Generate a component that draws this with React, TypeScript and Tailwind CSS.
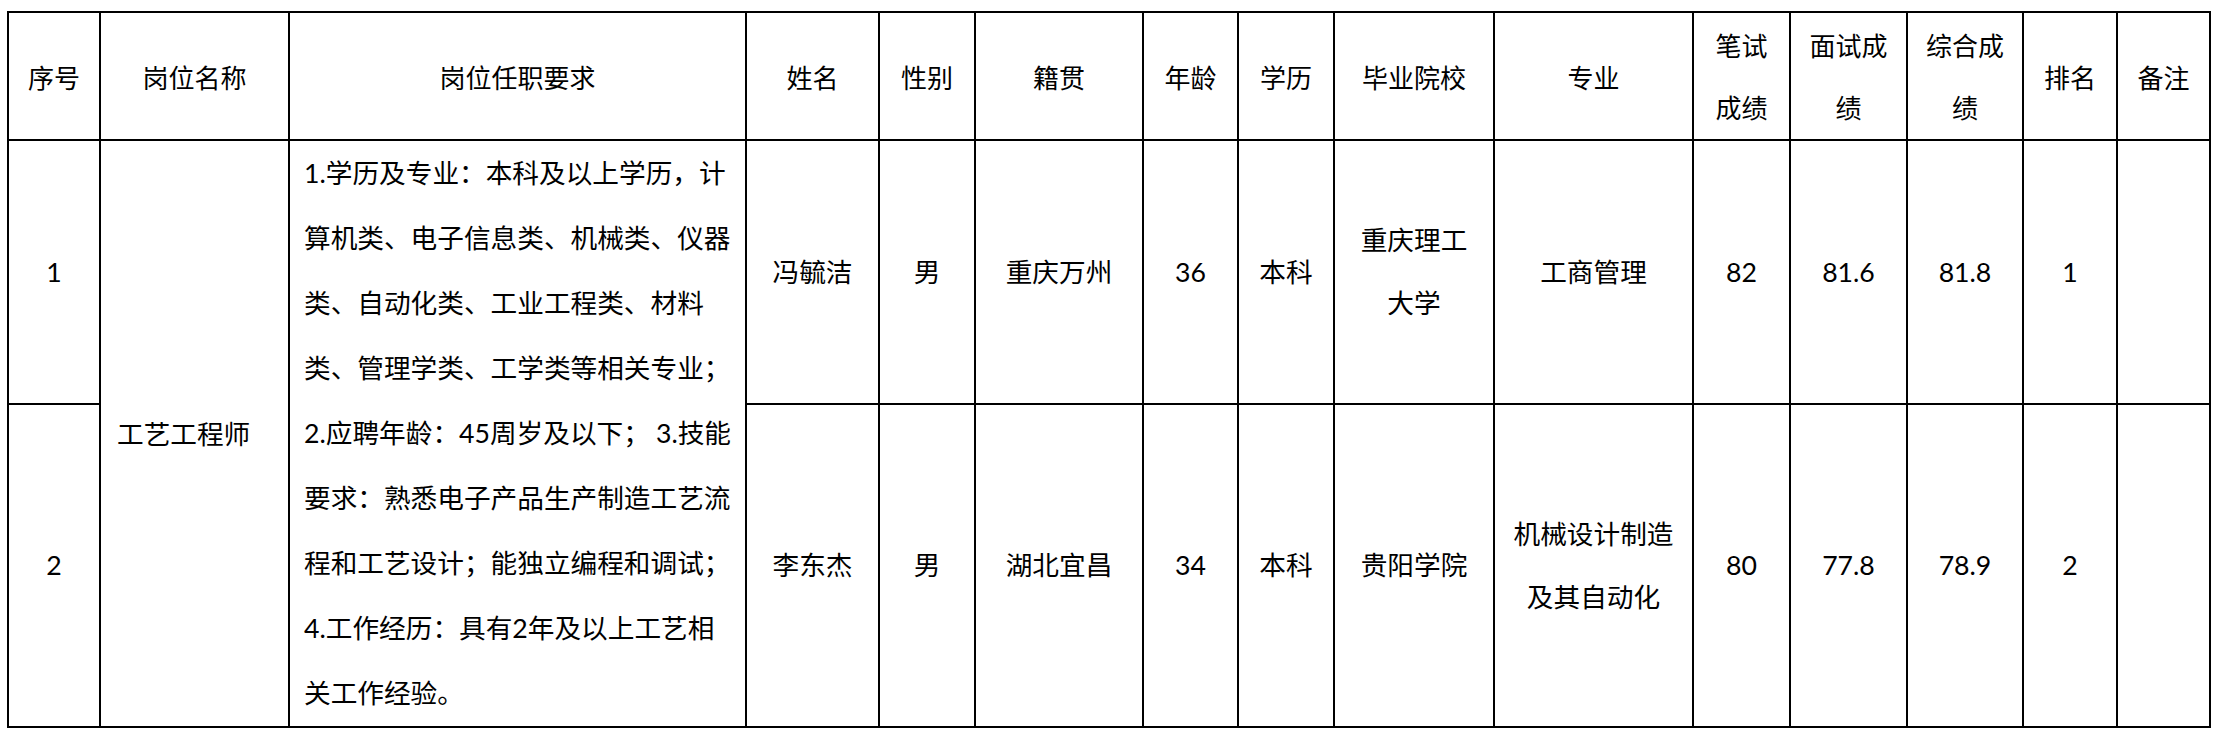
import React from "react";

const font = "font-['Lato','Noto_Sans_CJK_SC',sans-serif]";

function H({ children, lines }: { children?: React.ReactNode; lines?: string[] }) {
  return (
    <th className="border-2 border-black p-0 text-center align-middle font-normal text-[26px] text-black font-['Noto_Sans_CJK_SC',sans-serif]">
      {lines ? (
        <div className="leading-[62px]">
          {lines.map((l, i) => (
            <div key={i}>{l}</div>
          ))}
        </div>
      ) : (
        children
      )}
    </th>
  );
}

function D({ children, lines }: { children?: React.ReactNode; lines?: string[] }) {
  return (
    <td className={`border-2 border-black p-0 text-center align-middle text-[26.67px] text-black ${font}`}>
      {lines ? (
        <div className="leading-[63px]">
          {lines.map((l, i) => (
            <div key={i}>{l}</div>
          ))}
        </div>
      ) : (
        <span className="leading-[63px]">{children}</span>
      )}
    </td>
  );
}

export default function App() {
  return (
    <div className="w-[2220px] h-[733px] bg-white pt-[11px] pl-[7px]">
      <table className="table-fixed border-collapse w-[2204px]">
        <colgroup>
          <col className="w-[92px]" />
          <col className="w-[189px]" />
          <col className="w-[457px]" />
          <col className="w-[133px]" />
          <col className="w-[96px]" />
          <col className="w-[168px]" />
          <col className="w-[95px]" />
          <col className="w-[96px]" />
          <col className="w-[160px]" />
          <col className="w-[199px]" />
          <col className="w-[97px]" />
          <col className="w-[117px]" />
          <col className="w-[116px]" />
          <col className="w-[94px]" />
          <col className="w-[93px]" />
        </colgroup>
        <thead>
          <tr className="h-[128px]">
            <H>序号</H>
            <H>岗位名称</H>
            <H>岗位任职要求</H>
            <H>姓名</H>
            <H>性别</H>
            <H>籍贯</H>
            <H>年龄</H>
            <H>学历</H>
            <H>毕业院校</H>
            <H>专业</H>
            <H lines={["笔试", "成绩"]} />
            <H lines={["面试成", "绩"]} />
            <H lines={["综合成", "绩"]} />
            <H>排名</H>
            <H>备注</H>
          </tr>
        </thead>
        <tbody>
          <tr className="h-[264px]">
            <D>1</D>
            <td
              rowSpan={2}
              className={`border-2 border-black p-0 pl-[16px] text-left align-middle text-[26.67px] text-black ${font}`}
            >
              工艺工程师
            </td>
            <td
              rowSpan={2}
              className={`border-2 border-black p-0 pl-[14px] pr-[14px] text-left align-middle text-[26.67px] text-black ${font}`}
            >
              <div className="leading-[65px] whitespace-nowrap">
                <div>1.学历及专业：本科及以上学历，计</div>
                <div>算机类、电子信息类、机械类、仪器</div>
                <div>类、自动化类、工业工程类、材料</div>
                <div>类、管理学类、工学类等相关专业；</div>
                <div className="flex justify-between">
                  <span>2.应聘年龄：45周岁及以下；</span>
                  <span>3.技能</span>
                </div>
                <div>要求：熟悉电子产品生产制造工艺流</div>
                <div>程和工艺设计；能独立编程和调试；</div>
                <div>4.工作经历：具有2年及以上工艺相</div>
                <div>关工作经验。</div>
              </div>
            </td>
            <D>冯毓洁</D>
            <D>男</D>
            <D>重庆万州</D>
            <D>36</D>
            <D>本科</D>
            <D lines={["重庆理工", "大学"]} />
            <D>工商管理</D>
            <D>82</D>
            <D>81.6</D>
            <D>81.8</D>
            <D>1</D>
            <D></D>
          </tr>
          <tr className="h-[323px]">
            <D>2</D>
            <D>李东杰</D>
            <D>男</D>
            <D>湖北宜昌</D>
            <D>34</D>
            <D>本科</D>
            <D>贵阳学院</D>
            <D lines={["机械设计制造", "及其自动化"]} />
            <D>80</D>
            <D>77.8</D>
            <D>78.9</D>
            <D>2</D>
            <D></D>
          </tr>
        </tbody>
      </table>
    </div>
  );
}
